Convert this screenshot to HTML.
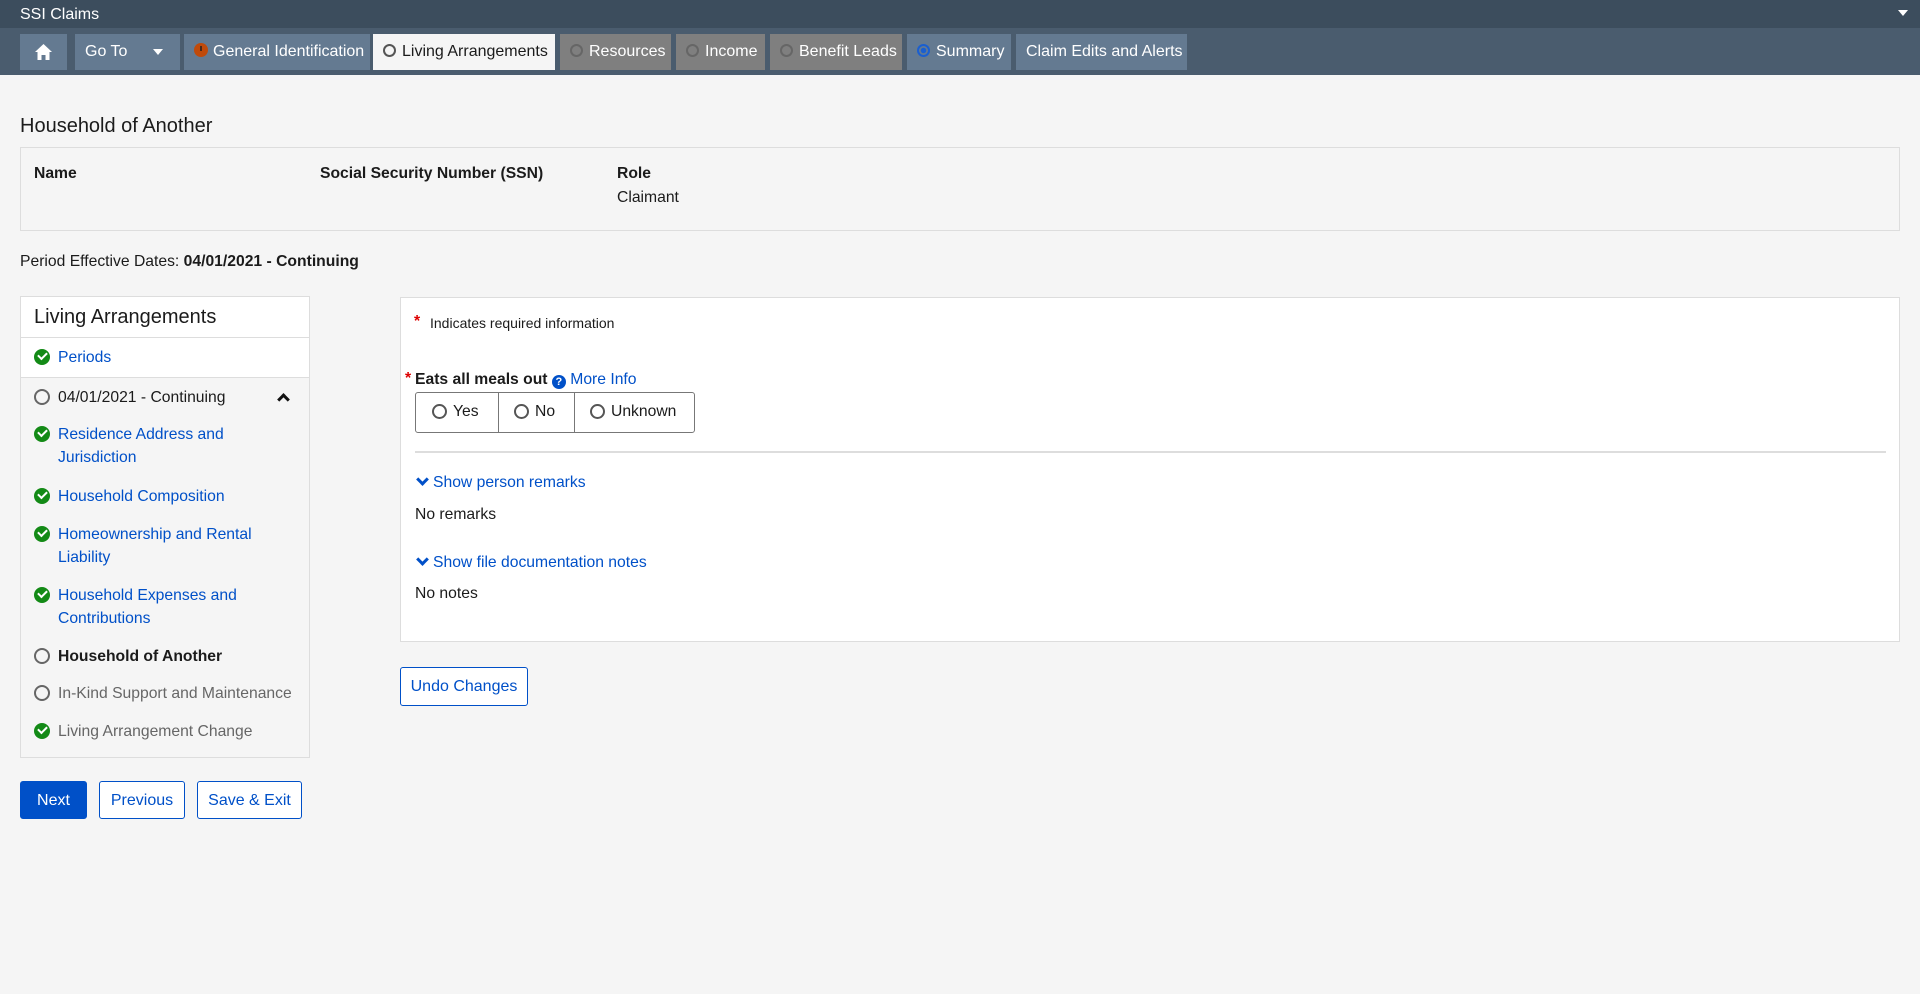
<!DOCTYPE html>
<html><head><meta charset="utf-8"><style>
*{box-sizing:border-box;margin:0;padding:0}
body{width:1920px;height:994px;background:#f5f5f5;font-family:"Liberation Sans",Arial,sans-serif;font-size:15.7px;color:#1b1b1b;position:relative;overflow:hidden}
.a{position:absolute;white-space:nowrap}
.top{position:absolute;left:0;top:0;width:1920px;height:28px;background:#3c4d5d;color:#fff;font-size:16px}
.nav{position:absolute;left:0;top:28px;width:1920px;height:47px;background:#4a5c6e}
.tab{position:absolute;top:6px;height:36px;background:#647a91;color:#fff;font-size:16px;line-height:36px;padding-left:10px}
.tab.g{background:#7f7f7f}
.tab.w{background:#f5f5f5;color:#1b1b1b}
.rc{display:inline-block;width:13px;height:13px;border-radius:50%;border:2px solid currentColor;vertical-align:-1px;margin-right:6px}
a,.lk{color:#0050c8;text-decoration:none}
.ck{position:absolute;left:34px;width:16px;height:16px;border-radius:50%;background:#138a16}
.ck:after{content:"";position:absolute;left:4px;top:3px;width:7px;height:4px;border-left:2.5px solid #fff;border-bottom:2.5px solid #fff;transform:rotate(-45deg)}
.oc{position:absolute;left:34px;width:16px;height:16px;border-radius:50%;border:2px solid #666}
.ni{position:absolute;left:58px;line-height:23px}
.btn{position:absolute;border:1px solid #0050c8;border-radius:3px;color:#0050c8;background:#fff;text-align:center;font-size:16px}
.chev{display:inline-block;width:9px;height:9px;border-right:3px solid #0050c8;border-bottom:3px solid #0050c8;transform:rotate(45deg);margin:0 6px 3px 3px}
</style></head><body>
<div class="top"><span class="a" style="left:20px;top:6px">SSI Claims</span>
<span class="a" style="right:12px;top:10px;width:0;height:0;border-left:5px solid transparent;border-right:5px solid transparent;border-top:6px solid #fff"></span></div>
<div class="nav">
<div class="tab" style="left:20px;width:47px;padding:0">
<svg width="47" height="36" viewBox="0 0 47 36"><path d="M23.5 10 L15 18 H17.5 V26 H21.5 V21 H25.5 V26 H29.5 V18 H32 Z" fill="#fff"/></svg></div>
<div class="tab" style="left:75px;width:105px">Go To<span class="a" style="left:78px;top:15px;width:0;height:0;border-left:5px solid transparent;border-right:5px solid transparent;border-top:6px solid #fff"></span></div>
<div class="tab" style="left:184px;width:186px"><span style="display:inline-block;width:14px;height:14px;border-radius:50%;background:#c04a0a;vertical-align:-1px;margin-right:5px;position:relative"><span style="position:absolute;left:6px;top:3px;width:2px;height:5px;background:#4a2a1a"></span></span>General Identification</div>
<div class="tab w" style="left:373px;width:182px"><span class="rc" style="color:#555"></span>Living Arrangements</div>
<div class="tab g" style="left:560px;width:111px"><span class="rc" style="color:#666"></span>Resources</div>
<div class="tab g" style="left:676px;width:89px"><span class="rc" style="color:#666"></span>Income</div>
<div class="tab g" style="left:770px;width:132px"><span class="rc" style="color:#666"></span>Benefit Leads</div>
<div class="tab" style="left:907px;width:104px"><span class="rc" style="color:#1a5fd0;background:radial-gradient(circle,#1a5fd0 2.5px,transparent 3px)"></span>Summary</div>
<div class="tab" style="left:1016px;width:171px">Claim Edits and Alerts</div>
</div>

<div class="a" style="left:20px;top:115px;font-size:20px">Household of Another</div>
<div class="a" style="left:20px;top:147px;width:1880px;height:84px;border:1px solid #ddd"></div>
<div class="a" style="left:34px;top:165px;font-weight:bold">Name</div>
<div class="a" style="left:320px;top:165px;font-weight:bold">Social Security Number (SSN)</div>
<div class="a" style="left:617px;top:165px;font-weight:bold">Role</div>
<div class="a" style="left:617px;top:189px">Claimant</div>
<div class="a" style="left:20px;top:253px">Period Effective Dates: <b>04/01/2021 - Continuing</b></div>

<div class="a" style="left:20px;top:296px;width:290px;height:462px;border:1px solid #ddd;background:#f5f5f5"></div>
<div class="a" style="left:21px;top:297px;width:288px;height:80px;background:#fff"></div>
<div class="a" style="left:21px;top:337px;width:288px;height:1px;background:#ddd"></div>
<div class="a" style="left:21px;top:377px;width:288px;height:1px;background:#ddd"></div>
<div class="a" style="left:34px;top:306px;font-size:20px">Living Arrangements</div>
<div class="ck" style="top:349px"></div><a class="ni" style="top:346px">Periods</a>
<div class="oc" style="top:389px"></div><span class="ni" style="top:386px">04/01/2021 - Continuing</span>
<span class="a" style="left:279px;top:395px;width:9px;height:9px;border-left:3px solid #111;border-top:3px solid #111;transform:rotate(45deg)"></span>
<div class="ck" style="top:426px"></div><a class="ni" style="top:423px">Residence Address and<br>Jurisdiction</a>
<div class="ck" style="top:488px"></div><a class="ni" style="top:485px">Household Composition</a>
<div class="ck" style="top:526px"></div><a class="ni" style="top:523px">Homeownership and Rental<br>Liability</a>
<div class="ck" style="top:587px"></div><a class="ni" style="top:584px">Household Expenses and<br>Contributions</a>
<div class="oc" style="top:648px"></div><b class="ni" style="top:645px">Household of Another</b>
<div class="oc" style="top:685px"></div><span class="ni" style="top:682px;color:#666">In-Kind Support and Maintenance</span>
<div class="ck" style="top:723px"></div><span class="ni" style="top:720px;color:#666">Living Arrangement Change</span>

<div class="a" style="left:400px;top:297px;width:1500px;height:345px;border:1px solid #ddd;background:#fff"></div>
<div class="a" style="left:414px;top:313px;color:#d00;font-weight:bold">*</div>
<div class="a" style="left:430px;top:315px;font-size:14px">Indicates required information</div>
<div class="a" style="left:405px;top:370px;color:#d00;font-weight:bold">*</div>
<div class="a" style="left:415px;top:371px;font-weight:bold">Eats all meals out <span style="display:inline-block;width:14px;height:14px;border-radius:50%;background:#0050c8;color:#fff;font-size:11px;text-align:center;line-height:14px;vertical-align:-1px">?</span><span class="lk" style="font-weight:normal"> More Info</span></div>
<div class="a" style="left:415px;top:392px;width:280px;height:41px;border:1px solid #777;border-radius:3px;background:#fff"></div>
<div class="a" style="left:498px;top:393px;width:1px;height:39px;background:#777"></div>
<div class="a" style="left:574px;top:393px;width:1px;height:39px;background:#777"></div>
<div class="a" style="left:432px;top:403px"><span class="rc" style="color:#555;width:15px;height:15px;vertical-align:-3px"></span>Yes</div>
<div class="a" style="left:514px;top:403px"><span class="rc" style="color:#555;width:15px;height:15px;vertical-align:-3px"></span>No</div>
<div class="a" style="left:590px;top:403px"><span class="rc" style="color:#555;width:15px;height:15px;vertical-align:-3px"></span>Unknown</div>
<div class="a" style="left:415px;top:451px;width:1471px;height:2px;background:#ddd"></div>
<div class="a lk" style="left:415px;top:474px"><span class="chev"></span>Show person remarks</div>
<div class="a" style="left:415px;top:506px">No remarks</div>
<div class="a lk" style="left:415px;top:554px"><span class="chev"></span>Show file documentation notes</div>
<div class="a" style="left:415px;top:585px">No notes</div>
<div class="btn" style="left:400px;top:667px;width:128px;height:39px;line-height:37px">Undo Changes</div>

<div class="btn" style="left:20px;top:781px;width:67px;height:38px;line-height:37px;background:#0050c8;color:#fff">Next</div>
<div class="btn" style="left:99px;top:781px;width:86px;height:38px;line-height:37px">Previous</div>
<div class="btn" style="left:197px;top:781px;width:105px;height:38px;line-height:37px">Save &amp; Exit</div>
</body></html>
